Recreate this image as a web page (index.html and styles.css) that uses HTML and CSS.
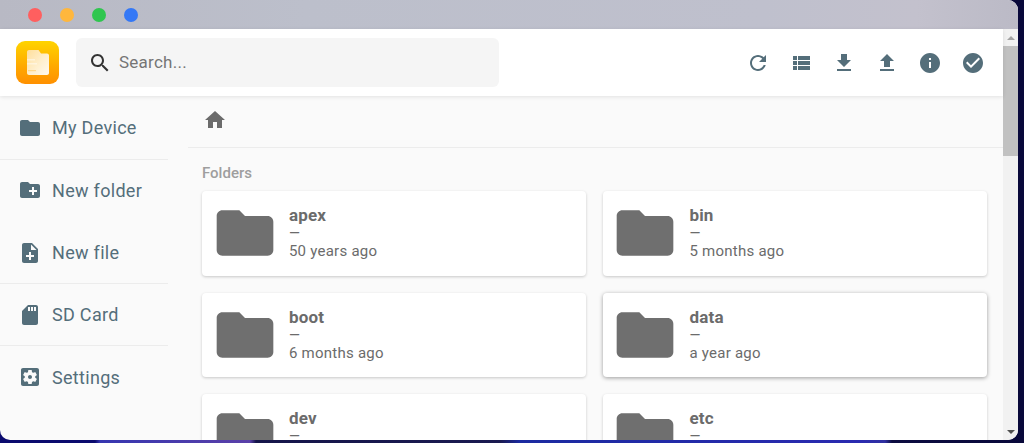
FILE: index.html
```html
<!DOCTYPE html>
<html lang="en">
<head>
<meta charset="utf-8">
<title>File Manager</title>
<link rel="stylesheet" href="styles.css">
</head>
<body>
<div class="window">
  <div class="titlebar">
    <span class="dot dot-red"></span><span class="dot dot-yellow"></span><span class="dot dot-green"></span><span class="dot dot-blue"></span>
  </div>
  <div class="viewport">
    <div class="page">
      <header class="header">
        <div class="logo">
          <svg viewBox="0 0 22 25" class="logo-doc"><defs><linearGradient id="docg" x1="0" y1="0" x2="1" y2="1"><stop offset="0" stop-color="#ffdf9c"/><stop offset=".55" stop-color="#ffefcd"/><stop offset="1" stop-color="#fffaf0"/></linearGradient></defs><path fill="url(#docg)" d="M2 0h9.500l2.500 3.500h6c1.100 0 2 .9 2 2V23c0 1.100-.9 2-2 2H2c-1.100 0-2-.9-2-2V2C0 .9.9 0 2 0z"/><path fill="#fff" opacity=".45" d="M0 9h8v1.500H0zM0 13h10v1.500H0z"/><path fill="#ffcf70" opacity=".7" d="M1 20h8v1.200H1z"/></svg>
        </div>
        <div class="search">
          <svg viewBox="0 0 24 24" class="search-icon"><path d="M15.500 14h-.79l-.28-.27C15.410 12.590 16 11.110 16 9.500 16 5.910 13.090 3 9.500 3S3 5.910 3 9.500 5.910 16 9.500 16c1.610 0 3.090-.59 4.230-1.570l.27.28v.79l5 4.990L20.490 19l-4.990-5zm-6 0C7.010 14 5 11.990 5 9.500S7.010 5 9.500 5 14 7.010 14 9.500 11.990 14 9.500 14z"/></svg>
          <span class="search-text">Search...</span>
        </div>
        <div class="actions">
          <svg viewBox="0 0 24 24" class="icon"><path d="M17.650 6.350C16.200 4.900 14.210 4 12 4c-4.420 0-7.990 3.580-7.990 8s3.570 8 7.990 8c3.730 0 6.840-2.550 7.730-6h-2.080c-.82 2.330-3.040 4-5.650 4-3.310 0-6-2.690-6-6s2.690-6 6-6c1.660 0 3.140.69 4.220 1.780L13 11h7V4l-2.350 2.350z"/></svg>
          <svg viewBox="0 0 24 24" class="icon"><path d="M4 14h4v-4H4v4zm0 5h4v-4H4v4zM4 9h4V5H4v4zm5 5h12v-4H9v4zm0 5h12v-4H9v4zM9 5v4h12V5H9z"/></svg>
          <svg viewBox="0 0 24 24" class="icon"><path d="M19 9h-4V3H9v6H5l7 7 7-7zM5 18v2h14v-2H5z"/></svg>
          <svg viewBox="0 0 24 24" class="icon"><path d="M9 16h6v-6h4l-7-7-7 7h4v6zm-4 2h14v2H5v-2z"/></svg>
          <svg viewBox="0 0 24 24" class="icon"><path d="M12 2C6.480 2 2 6.480 2 12s4.480 10 10 10 10-4.480 10-10S17.520 2 12 2zm1 15h-2v-6h2v6zm0-8h-2V7h2v2z"/></svg>
          <svg viewBox="0 0 24 24" class="icon"><path d="M12 2C6.480 2 2 6.480 2 12s4.480 10 10 10 10-4.480 10-10S17.520 2 12 2zm-2 15l-5-5 1.410-1.410L10 14.170l7.590-7.590L19 8l-9 9z"/></svg>
        </div>
      </header>
      <div class="body">
        <nav class="sidebar">
          <a class="nav-item nav-line nav-first">
            <svg viewBox="0 0 24 24" class="icon"><path d="M10 4H4c-1.100 0-1.990.9-1.990 2L2 18c0 1.100.9 2 2 2h16c1.100 0 2-.9 2-2V8c0-1.100-.9-2-2-2h-8l-2-2z"/></svg>
            <span>My Device</span>
          </a>
          <a class="nav-item nav-second">
            <svg viewBox="0 0 24 24" class="icon"><path d="M20 6h-8l-2-2H4c-1.110 0-1.990.89-1.990 2L2 18c0 1.110.89 2 2 2h16c1.110 0 2-.89 2-2V8c0-1.110-.89-2-2-2zm-1 8h-3v3h-2v-3h-3v-2h3V9h2v3h3v2z"/></svg>
            <span>New folder</span>
          </a>
          <a class="nav-item nav-line">
            <svg viewBox="0 0 24 24" class="icon"><path d="M14 2H6c-1.100 0-1.990.9-1.990 2L4 20c0 1.100.89 2 1.990 2H18c1.100 0 2-.9 2-2V8l-6-6zm2 14h-3v3h-2v-3H8v-2h3v-3h2v3h3v2zm-3-7V3.500L18.500 9H13z"/></svg>
            <span>New file</span>
          </a>
          <a class="nav-item nav-line">
            <svg viewBox="0 0 24 24" class="icon"><path d="M18 2h-8L4.020 8 4 20c0 1.100.9 2 2 2h12c1.100 0 2-.9 2-2V4c0-1.100-.9-2-2-2zm-6 6h-2V4h2v4zm3 0h-2V4h2v4zm3 0h-2V4h2v4z"/></svg>
            <span>SD Card</span>
          </a>
          <a class="nav-item">
            <svg viewBox="0 0 24 24" class="icon"><path d="M12 10c-1.100 0-2 .9-2 2s.9 2 2 2 2-.9 2-2-.9-2-2-2zm7-7H5c-1.110 0-2 .9-2 2v14c0 1.100.89 2 2 2h14c1.110 0 2-.9 2-2V5c0-1.100-.89-2-2-2zm-1.750 9c0 .23-.02.46-.05.68l1.480 1.160c.13.11.17.3.08.45l-1.400 2.420c-.09.15-.27.21-.43.15l-1.740-.7c-.36.28-.76.51-1.180.69l-.26 1.850c-.03.17-.18.3-.35.3h-2.800c-.17 0-.32-.13-.35-.29l-.26-1.850c-.43-.18-.82-.41-1.180-.69l-1.740.7c-.16.06-.34 0-.43-.15l-1.400-2.420c-.09-.15-.05-.34.08-.45l1.480-1.160c-.03-.23-.05-.46-.05-.69 0-.23.02-.46.05-.68l-1.480-1.160c-.13-.11-.17-.3-.08-.45l1.400-2.420c.09-.15.27-.21.43-.15l1.740.7c.36-.28.76-.51 1.180-.69l.26-1.850c.03-.17.18-.3.35-.3h2.800c.17 0 .32.13.35.29l.26 1.850c.43.18.82.41 1.180.69l1.740-.7c.16-.06.34 0 .43.15l1.400 2.420c.09.15.05.34-.08.45l-1.480 1.160c.03.23.05.46.05.69z"/></svg>
            <span>Settings</span>
          </a>
        </nav>
        <main class="main">
          <div class="crumbs">
            <svg viewBox="0 0 24 24" class="home"><path d="M10 20v-6h4v6h5v-8h3L12 3 2 12h3v8z"/></svg>
          </div>
          <h2 class="section">Folders</h2>
          <div class="grid">
            <div class="card"><svg viewBox="0 0 24 24" class="folder"><path d="M10 4H4c-1.100 0-1.990.9-1.990 2L2 18c0 1.100.9 2 2 2h16c1.100 0 2-.9 2-2V8c0-1.100-.9-2-2-2h-8l-2-2z"/></svg><div class="meta"><div class="name">apex</div><div class="size">—</div><div class="date">50 years ago</div></div></div>
            <div class="card"><svg viewBox="0 0 24 24" class="folder"><path d="M10 4H4c-1.100 0-1.990.9-1.990 2L2 18c0 1.100.9 2 2 2h16c1.100 0 2-.9 2-2V8c0-1.100-.9-2-2-2h-8l-2-2z"/></svg><div class="meta"><div class="name">bin</div><div class="size">—</div><div class="date">5 months ago</div></div></div>
            <div class="card"><svg viewBox="0 0 24 24" class="folder"><path d="M10 4H4c-1.100 0-1.990.9-1.990 2L2 18c0 1.100.9 2 2 2h16c1.100 0 2-.9 2-2V8c0-1.100-.9-2-2-2h-8l-2-2z"/></svg><div class="meta"><div class="name">boot</div><div class="size">—</div><div class="date">6 months ago</div></div></div>
            <div class="card card-active"><svg viewBox="0 0 24 24" class="folder"><path d="M10 4H4c-1.100 0-1.990.9-1.990 2L2 18c0 1.100.9 2 2 2h16c1.100 0 2-.9 2-2V8c0-1.100-.9-2-2-2h-8l-2-2z"/></svg><div class="meta"><div class="name">data</div><div class="size">—</div><div class="date">a year ago</div></div></div>
            <div class="card"><svg viewBox="0 0 24 24" class="folder"><path d="M10 4H4c-1.100 0-1.990.9-1.990 2L2 18c0 1.100.9 2 2 2h16c1.100 0 2-.9 2-2V8c0-1.100-.9-2-2-2h-8l-2-2z"/></svg><div class="meta"><div class="name">dev</div><div class="size">—</div></div></div>
            <div class="card"><svg viewBox="0 0 24 24" class="folder"><path d="M10 4H4c-1.100 0-1.990.9-1.990 2L2 18c0 1.100.9 2 2 2h16c1.100 0 2-.9 2-2V8c0-1.100-.9-2-2-2h-8l-2-2z"/></svg><div class="meta"><div class="name">etc</div><div class="size">—</div></div></div>
          </div>
        </main>
      </div>
    </div>
    <div class="scrollbar">
      <span class="arrow arrow-up"></span>
      <div class="track"><div class="thumb"></div></div>
      <span class="arrow arrow-down"></span>
    </div>
  </div>
</div>
</body>
</html>
```
FILE: styles.css
```css
* { box-sizing: border-box; }
html, body { margin: 0; height: 100%; }
body {
  background: linear-gradient(90deg, #0a0a6e 0, #0a0a6e 95px, #3636b0 100px, #5a40a8 250px, #15154a 256px, #1a1a50 500px, #1b2aa0 520px, #2a2ab0 860px, #3030a0 885px, #0c0c40 892px, #08083a 1024px);
  font-family: Roboto, "Liberation Sans", sans-serif;
  overflow: hidden;
  height: 443px;
}
.window {
  width: 1018px;
  height: 440px;
  background: #fafafa;
  border-radius: 0 10px 10px 10px;
  overflow: hidden;
  display: flex;
  flex-direction: column;
}
.titlebar {
  height: 29px;
  flex: none;
  background: linear-gradient(90deg, #b8b9c4 0%, #bcbfcb 30%, #bfc0cd 75%, #c3c1cd 90%, #bbbac6 100%);
  display: flex;
  align-items: center;
  gap: 18px;
  padding: 0 0 0 28px;
}
.dot { width: 14px; height: 14px; border-radius: 50%; }
.dot-red { background: #ff5f5f; }
.dot-yellow { background: #ffb73d; }
.dot-green { background: #2fc64f; }
.dot-blue { background: #3478f6; }
.viewport { flex: 1; display: flex; min-height: 0; }
.page { flex: 1; min-width: 0; display: flex; flex-direction: column; }
.header {
  height: 67px;
  flex: none;
  background: #fff;
  box-shadow: 0 1px 4px rgba(0,0,0,.1);
  display: flex;
  align-items: center;
  padding: 0 18px 0 16px;
  position: relative;
}
.logo {
  width: 43px;
  height: 43px;
  border-radius: 9px;
  background: linear-gradient(180deg, #ffd400 0%, #ffa800 60%, #ff9000 100%);
  display: flex;
  align-items: center;
  justify-content: center;
  flex: none;
}
.logo-doc { width: 22px; height: 25px; }
.search {
  width: 423px;
  height: 49px;
  margin-left: 17px;
  background: #f5f5f5;
  border-radius: 6px;
  display: flex;
  align-items: center;
  padding-left: 12px;
  gap: 7px;
}
.search-icon { width: 24px; height: 24px; fill: #333; }
.search-text { font-size: 17px; letter-spacing: .25px; color: #757575; margin-top: -1px; }
.actions { margin-left: auto; display: flex; gap: 19px; }
.icon { width: 24px; height: 24px; fill: #546e7a; flex: none; }
.body { flex: 1; min-height: 0; display: flex; }
.sidebar { width: 168px; flex: none; padding-top: 2px; }
.nav-item {
  height: 62px;
  display: flex;
  align-items: center;
  padding-left: 18px;
  gap: 10px;
  font-size: 18px;
  letter-spacing: .3px;
  color: #546e7a;
}
.nav-first { padding-bottom: 2px; }
.nav-second { padding-bottom: 2px; }
.nav-line { border-bottom: 1px solid #ececec; }
.main { flex: 1; min-width: 0; margin-left: 20px; overflow: hidden; }
.crumbs {
  height: 52px;
  display: flex;
  align-items: flex-start;
  padding: 12px 0 0 14px;
  border-bottom: 1px solid #ececec;
}
.home { width: 24px; height: 24px; fill: #6b6b6b; margin-left: 1px; }
.section {
  margin: 0;
  padding: 17px 0 0 14px;
  font-size: 15px;
  line-height: 16px;
  font-weight: 500;
  color: #9e9e9e;
}
.grid {
  display: grid;
  grid-template-columns: 384px 384px;
  column-gap: 16.500px;
  row-gap: 17px;
  margin: 10px 0 0 14px;
}
.card {
  height: 84.500px;
  background: #fff;
  border-radius: 4px;
  box-shadow: 0 1px 3px rgba(0,0,0,.2);
  display: flex;
  align-items: center;
  padding-left: 8.900px;
  gap: 10px;
  color: #6b6b6b;
}
.card-active { box-shadow: 0 1px 4px rgba(0,0,0,.38); }
.folder { width: 68px; height: 68px; fill: #6f6f6f; flex: none; }
.meta { padding-top: 1px; align-self: flex-start; margin-top: 13px; }
.name { font-size: 17px; font-weight: 700; line-height: 20px; letter-spacing: .2px; }
.size { font-size: 14px; line-height: 16px; }
.date { font-size: 15px; line-height: 20px; letter-spacing: .25px; }
.scrollbar {
  width: 15px;
  flex: none;
  background: #f1f1f1;
  display: flex;
  flex-direction: column;
}
.track { flex: 1; min-height: 0; }
.thumb { height: 110px; background: #c1c1c1; }
.arrow { height: 17px; flex: none; display: flex; justify-content: center; align-items: center; }
.arrow::before { content: ""; width: 0; height: 0; border-left: 4px solid transparent; border-right: 4px solid transparent; }
.arrow-up::before { border-bottom: 4px solid #a3a3a3; }
.arrow-down::before { border-top: 4px solid #505050; }
```
